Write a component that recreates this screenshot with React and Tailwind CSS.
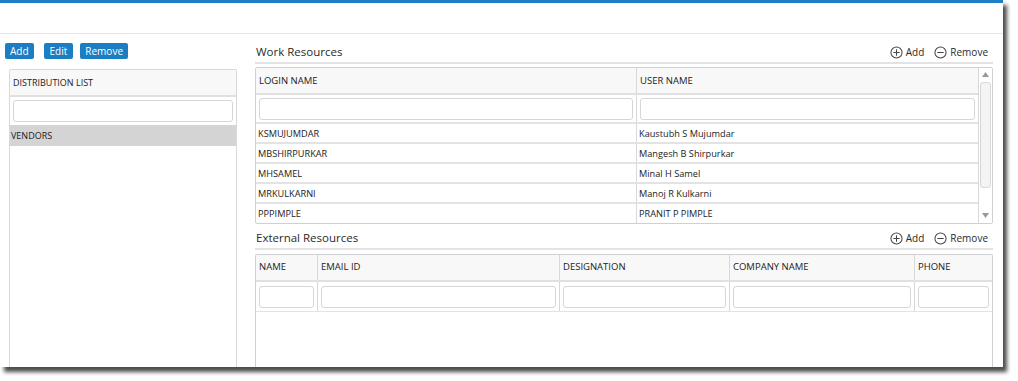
import React from "react";

const CirclePlus = () => (
  <svg width="13" height="13" viewBox="0 0 14 14" fill="none" stroke="#444" strokeWidth="1.1">
    <circle cx="7" cy="7" r="6" />
    <path d="M7 3.6v6.8M3.6 7h6.8" />
  </svg>
);
const CircleMinus = () => (
  <svg width="13" height="13" viewBox="0 0 14 14" fill="none" stroke="#444" strokeWidth="1.1">
    <circle cx="7" cy="7" r="6" />
    <path d="M3.6 7h6.8" />
  </svg>
);

const SectionTitle = ({ title }) => (
  <div className="h-[22px] flex items-center justify-between border-b-2 border-[#e3e3e3] pl-[1px] pr-[5px]">
    <span className="text-[11.5px] text-[#2a2a2a]">{title}</span>
    <div className="flex items-center text-[10px] text-[#2a2a2a]">
      <CirclePlus />
      <span className="ml-[3px]">Add</span>
      <span className="ml-[10px]"><CircleMinus /></span>
      <span className="ml-[3px]">Remove</span>
    </div>
  </div>
);

const Input = () => (
  <div className="h-[22px] w-full border border-[#d6d6d6] rounded-[3px] bg-white" />
);

const rows = [
  ["KSMUJUMDAR", "Kaustubh S Mujumdar"],
  ["MBSHIRPURKAR", "Mangesh B Shirpurkar"],
  ["MHSAMEL", "Minal H Samel"],
  ["MRKULKARNI", "Manoj R Kulkarni"],
  ["PPPIMPLE", "PRANIT P PIMPLE"],
];

export default function App() {
  return (
    <div className="w-[1018px] h-[381px] bg-white font-['Open_Sans',sans-serif] text-[#222]">
      <div className="w-[1003px] h-[367px] bg-white border-t-[3px] border-[#1f7fc4] shadow-[4px_5px_4px_rgba(0,0,0,0.7)] flex flex-col">
        <div className="h-[31px] border-b border-[#e8e8e8] shrink-0" />
        <div className="flex-1 flex min-h-0">
          {/* left column */}
          <div className="w-[237px] pl-[5px] pt-[9px] flex flex-col">
            <div className="flex items-center h-[16px]">
              <button className="h-[16px] px-[5px] bg-[#1b7dc2] text-white text-[10px] leading-none rounded-[2px]">Add</button>
              <button className="ml-[10px] h-[16px] px-[6px] bg-[#1b7dc2] text-white text-[10px] leading-none rounded-[2px]">Edit</button>
              <button className="ml-[7px] h-[16px] px-[5px] bg-[#1b7dc2] text-white text-[10px] leading-none rounded-[2px]">Remove</button>
            </div>
            <div className="mt-[10px] ml-[4px] w-[228px] flex-1 border border-b-0 border-[#d8d8d8] rounded-t-[2px] flex flex-col">
              <div className="h-[27px] bg-[#f8f8f8] border-b-2 border-[#e0e0e0] flex items-center pl-[3px] pt-[1px] text-[9px]">DISTRIBUTION LIST</div>
              <div className="px-[3px] pt-[3px] pb-[3px]">
                <Input />
              </div>
              <div className="h-[21px] bg-[#d4d4d4] flex items-center pl-[1px] text-[9px]">VENDORS</div>
            </div>
          </div>
          {/* right column */}
          <div className="ml-[18px] w-[738px] pt-[8px] flex flex-col">
            <SectionTitle title="Work Resources" />
            <div className="mt-[3px] border border-[#d0d0d0] rounded-[2px] flex shrink-0">
              <div className="w-[722px] flex flex-col">
                <div className="grid grid-cols-[381px_1fr] h-[27px] bg-[#f8f8f8] border-b-2 border-[#e0e0e0] text-[9.5px]">
                  <div className="flex items-center pl-[3px] pt-[1px] border-r border-[#d8d8d8]">LOGIN NAME</div>
                  <div className="flex items-center pl-[3px] pt-[1px]">USER NAME</div>
                </div>
                <div className="grid grid-cols-[381px_1fr] h-[29px] border-b-2 border-[#e3e3e3]">
                  <div className="flex items-center px-[3px] border-r border-[#d8d8d8]"><Input /></div>
                  <div className="flex items-center px-[3px]"><Input /></div>
                </div>
                {rows.map(([a, b], i) => (
                  <div key={a} className={`grid grid-cols-[381px_1fr] text-[9.2px] ${i < rows.length - 1 ? "h-[20px] border-b-2 border-[#e3e3e3]" : "h-[19px]"}`}>
                    <div className="flex items-center pl-[2px] pt-[1px] border-r border-[#d8d8d8]">{a}</div>
                    <div className="flex items-center pl-[2px] pt-[1px]">{b}</div>
                  </div>
                ))}
              </div>
              <div className="flex-1 border-l border-[#d8d8d8] flex flex-col items-center bg-white">
                <svg width="7" height="5" viewBox="0 0 7 5" className="mt-[4px]"><path d="M0 5L3.5 0L7 5Z" fill="#9a9a9a" /></svg>
                <div className="mt-[5px] w-[11px] h-[106px] border border-[#d8d8d8] rounded-[3px] bg-[#f4f4f4]" />
                <div className="flex-1" />
                <svg width="7" height="5" viewBox="0 0 7 5" className="mb-[5px]"><path d="M0 0L3.5 5L7 0Z" fill="#9a9a9a" /></svg>
              </div>
            </div>
            <div className="mt-[4px]">
              <SectionTitle title="External Resources" />
            </div>
            <div className="mt-[4px] flex-1 border border-b-0 border-[#d0d0d0] rounded-t-[2px] flex flex-col">
              <div className="grid grid-cols-[62px_242px_170px_185px_1fr] h-[27px] bg-[#f8f8f8] border-b-2 border-[#e0e0e0] text-[9.5px]">
                <div className="flex items-center pl-[3px] border-r border-[#d8d8d8]">NAME</div>
                <div className="flex items-center pl-[3px] border-r border-[#d8d8d8]">EMAIL ID</div>
                <div className="flex items-center pl-[3px] border-r border-[#d8d8d8]">DESIGNATION</div>
                <div className="flex items-center pl-[3px] border-r border-[#d8d8d8]">COMPANY NAME</div>
                <div className="flex items-center pl-[3px]">PHONE</div>
              </div>
              <div className="grid grid-cols-[62px_242px_170px_185px_1fr] h-[30px] border-b border-[#e3e3e3]">
                <div className="flex items-center px-[3px] border-r border-[#d8d8d8]"><Input /></div>
                <div className="flex items-center px-[3px] border-r border-[#d8d8d8]"><Input /></div>
                <div className="flex items-center px-[3px] border-r border-[#d8d8d8]"><Input /></div>
                <div className="flex items-center px-[3px] border-r border-[#d8d8d8]"><Input /></div>
                <div className="flex items-center px-[3px]"><Input /></div>
              </div>
            </div>
          </div>
        </div>
      </div>
    </div>
  );
}
